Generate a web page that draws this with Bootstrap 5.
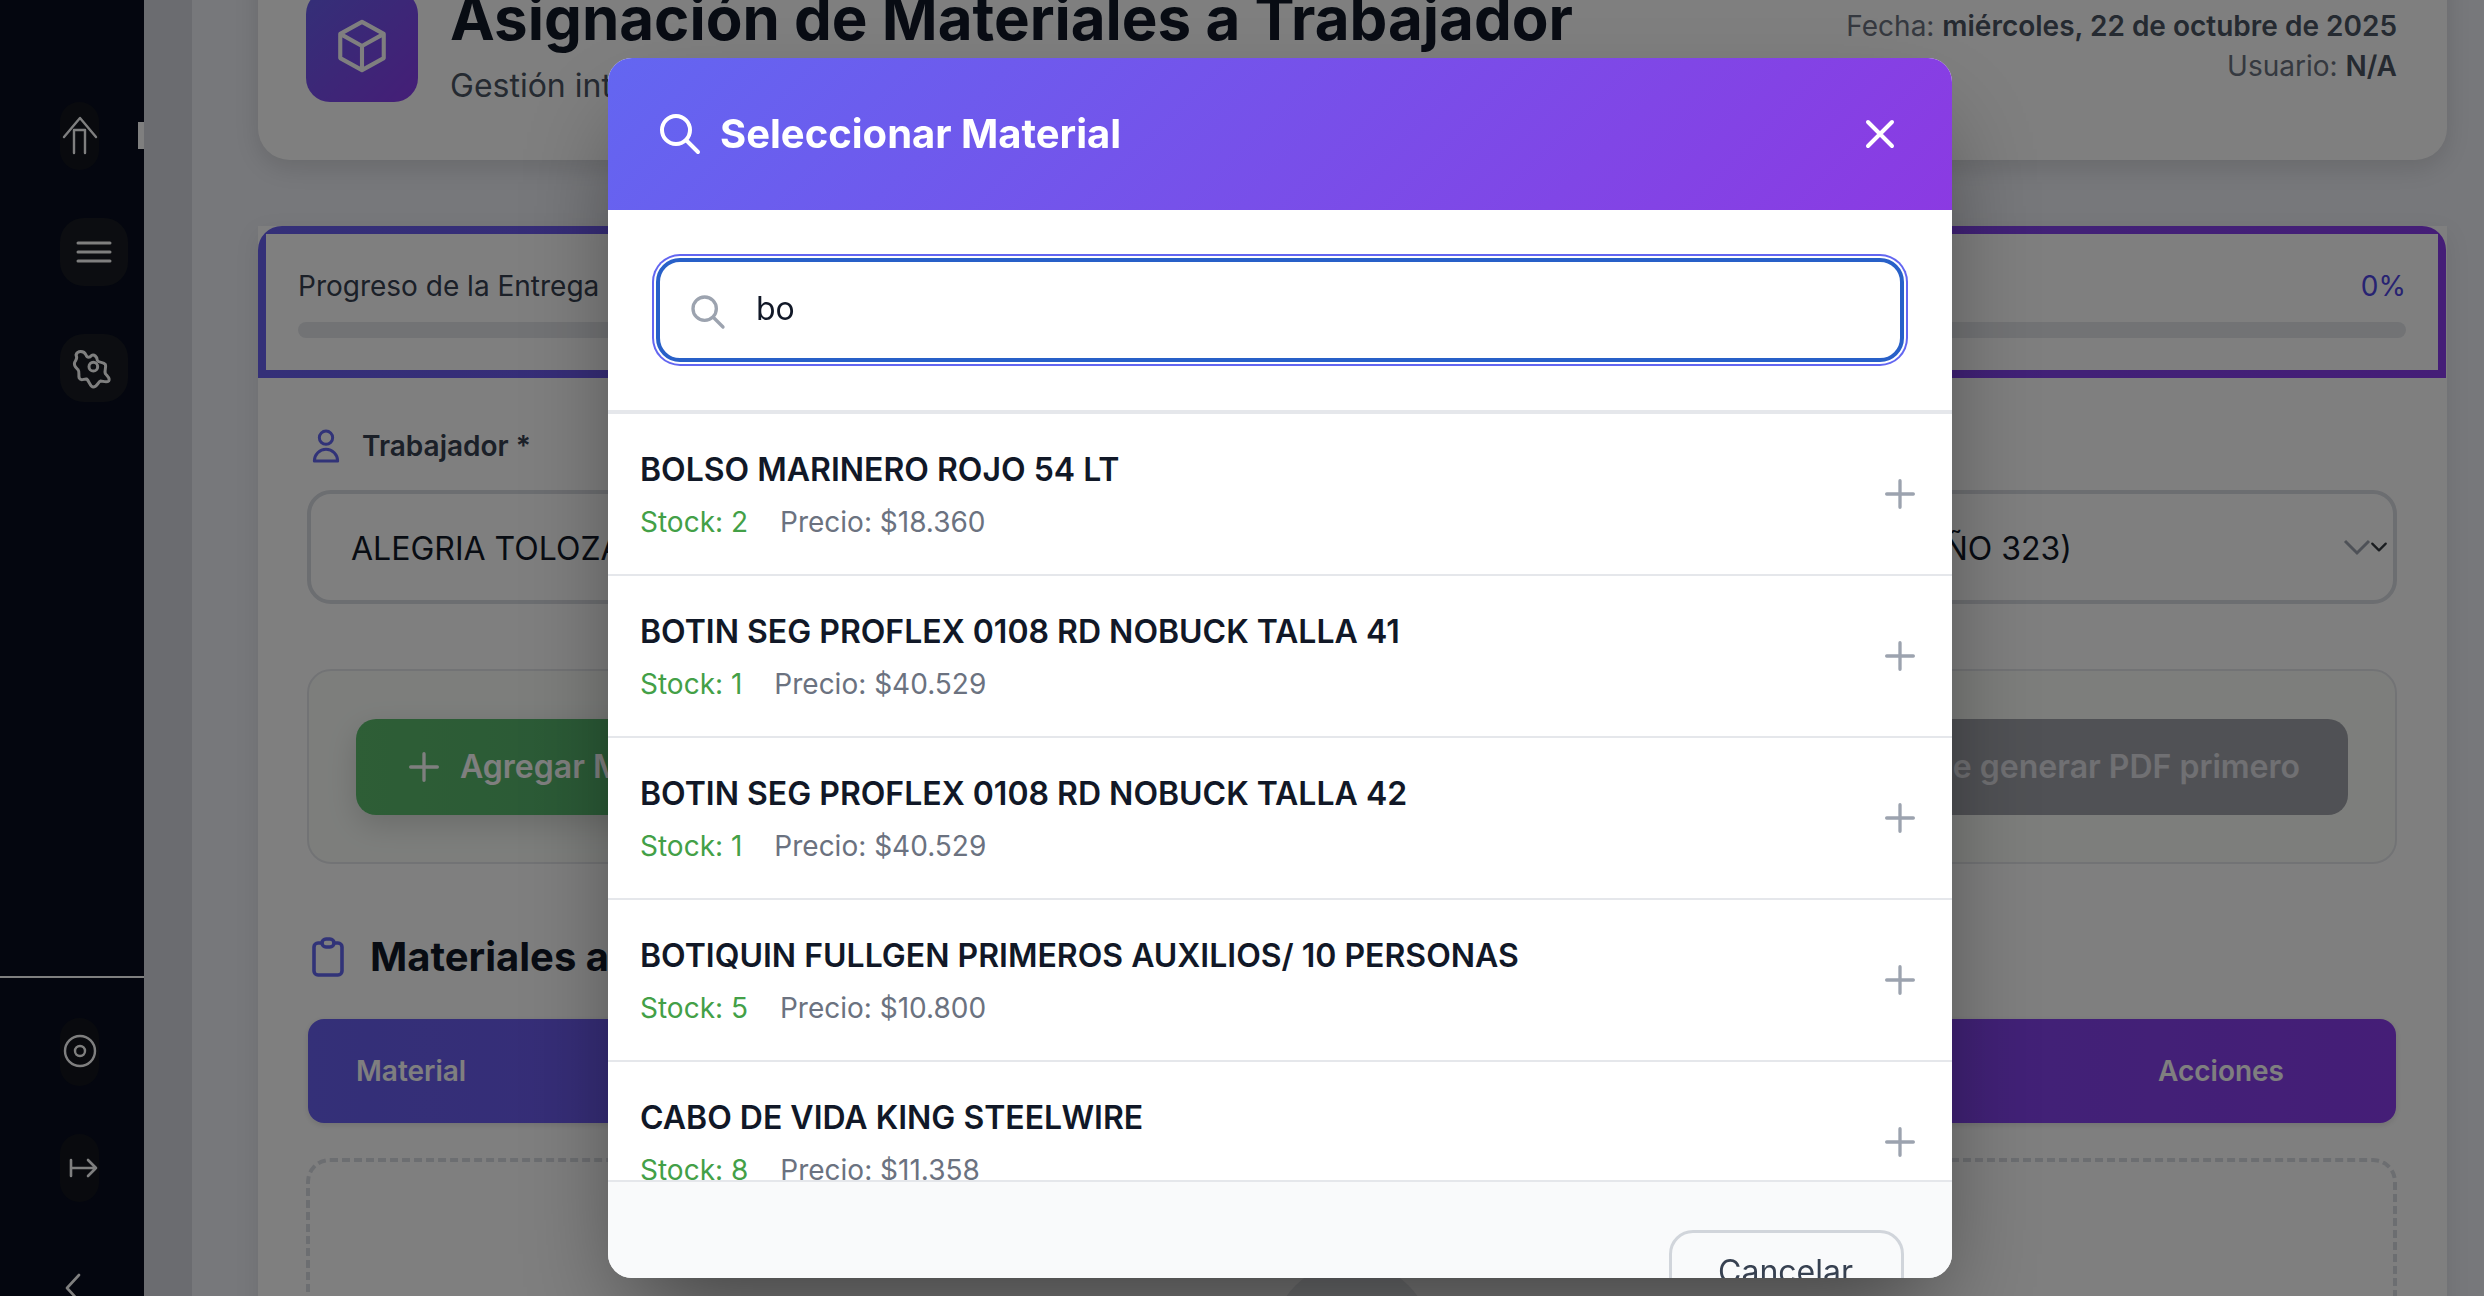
<!DOCTYPE html>
<html lang="es">
<head>
<meta charset="utf-8">
<title>Asignación de Materiales a Trabajador</title>
<link href="https://cdn.jsdelivr.net/npm/bootstrap@5.3.0/dist/css/bootstrap.min.css" rel="stylesheet">
<style>
html,body{height:100%;overflow:hidden}
body{font-family:"Inter","Liberation Sans",sans-serif;color:#111827;background:#eef0f6}
svg{display:block;flex:none}
.shell{height:1296px;overflow:hidden}
.side{width:144px;background:#080c1e;padding:102px 0 0 60px;position:relative}
.side-btn{background:#181b22;border-radius:24px;height:68px;width:68px;margin-bottom:48px;color:#fff;padding-top:14px}
.side-btn.narrow{width:39px;background:#12151d;color:#fff}
.side-btn.flush{padding-top:0}
.side-line{height:2px;background:#fff;margin:574px 0 40px -60px}
.side-handle{position:absolute;left:138px;top:122px;width:6px;height:27px;background:#fff}
.side-chev{margin:71px 0 0 3px}
.gutter{width:48px;background:#d6d8e0}
.main{padding:0 37px 0 66px;width:2292px}
.hero{height:218px;margin-top:-58px;background:#fff;border-radius:0 0 32px 32px;box-shadow:0 8px 24px rgba(0,0,0,.12);padding:48px 50px 0 48px}
.tile{width:112px;height:112px;border-radius:24px;background:linear-gradient(135deg,#6860f0,#8a3cee);color:#fff;margin-right:32px}
.hero-title{font-size:60px;line-height:72px;font-weight:700;margin:-8px 0 0;white-space:nowrap}
.hero-sub{font-size:32px;line-height:48px;color:#4b5563;margin:8px 0 0}
.hero-meta{font-size:28px;line-height:40px;color:#6b7280;text-align:right;margin-top:16px}
.hero-meta b{font-weight:600;color:#4b5563}
.panel{margin-top:66px;background:#fff;height:1200px;box-shadow:0 8px 24px rgba(0,0,0,.08);padding-bottom:0}
.bar-frame{background:linear-gradient(90deg,#6860f0,#8a3cee);padding:8px;border-radius:24px 24px 0 0;height:152px;margin-right:1px}
.bar-inner{background:#fff;height:136px;padding:32px 32px 0}
.bar-text{font-size:28px;line-height:40px;color:#374151;margin-bottom:16px}
.bar-pct{color:#4f46e5}
.bar-track{height:16px;background:#e5e7eb;border-radius:8px}
.form-area{padding:48px 50px 0 49px}
.label-row{font-size:28px;line-height:40px;font-weight:600;color:#374151;gap:8px}
.pick{margin-top:24px;height:114px;border:4px solid #d9dce2;border-radius:24px;font-size:32px;line-height:48px;color:#111827;padding:3px 0 0 40px;background-size:24px 18px;background-position:right 2px center;background-color:#fff;box-shadow:none}
.pick-text{width:1721px}
.pick-caret{color:#9ca3af;margin-left:auto;margin-right:22px;margin-top:-3px}
.action-box{margin-top:65px;height:195px;border:2px solid #e5e7eb;border-radius:24px;background:#fafdf9;padding:48px 47px}
.act{height:96px;border:0;border-radius:20px;font-size:32px;line-height:48px;font-weight:600;color:#fff;padding:0 48px}
.act-green{background:linear-gradient(90deg,#5cbc6c,#46a070);width:900px;gap:16px;box-shadow:0 10px 30px rgba(0,0,0,.15)}
.act-gray{background:#a1a3aa;color:#e0e0e6;width:1000px}
.sec-head{margin-top:63px;font-size:40px;line-height:60px;font-weight:700;gap:18px}
.sec-ico{margin-left:-3px}
.user-ico{margin-left:-1px}
.tbl-head{margin:32px 1px 0;height:104px;border-radius:16px;background:linear-gradient(90deg,#6860f0,#8a3cee);font-size:28px;font-weight:600;color:#fff;padding:0 112px 0 48px;box-shadow:0 2px 6px rgba(0,0,0,.12)}
.empty-box{margin:35px 0 0 -1px;height:500px;border:4px dashed #d9dce2;border-radius:24px;padding-top:100px}
.empty-dot{width:160px;height:160px;border-radius:50%;background:#e5e7eb}
.picker{max-width:1344px;margin:58px 0 0 608px}
.picker-card{height:1220px;border:0;border-radius:24px;overflow:hidden;box-shadow:0 50px 100px -24px rgba(0,0,0,.5)}
.picker-head{height:152px;padding:0 48px;background:linear-gradient(135deg,#6366f1,#8b3ae2);border:0;border-radius:0;color:#fff;gap:16px}
.picker-title{font-size:40px;line-height:56px;font-weight:700;margin:0}
.picker-close{margin-left:auto;background:none;border:0;padding:0;color:#fff}
.search-wrap{height:204px;padding:48px;border-bottom:4px solid #e5e7eb;position:relative}
.search-in{height:104px;border:4px solid #2860c8;border-radius:24px;font-size:32px;color:#111827;padding:0 32px 3px 96px;box-shadow:0 0 0 2px #fff,0 0 0 4px #6366f1}
.search-in:focus{border-color:#2860c8;box-shadow:0 0 0 2px #fff,0 0 0 4px #6366f1}
.search-ico{position:absolute;left:80px;top:82px;color:#9ca3af}
.mat-list{height:766px;overflow:hidden;border-radius:0}
.mat-item{height:162px;border:0;border-bottom:2px solid #e5e7eb;border-radius:0!important;padding:32px;margin:0}
.mat-name{font-size:32px;line-height:48px;font-weight:600;color:#111827}
.mat-sub{font-size:28px;line-height:40px;margin-top:8px;color:#6b7280;gap:32px}
.mat-stock{color:#43a047}
.mat-plus{color:#9ca3af;margin-left:auto}
.picker-foot{display:block;height:98px;background:#f9fafb;border:0;border-top:2px solid #e5e7eb;padding:48px 48px 0;text-align:right;border-radius:0}
.cancel{border:3px solid #d1d5db;border-radius:24px;background:#f9fafb;font-size:32px;line-height:48px;color:#374151;padding:14px 48px 14px 46px;margin:0;height:84px}
</style>
</head>
<body>
<div class="shell d-flex">
  <aside class="side flex-shrink-0">
    <div class="side-btn narrow"><svg width="39" height="40" viewBox="0 0 39 40" fill="none" stroke="currentColor" stroke-width="2.4" stroke-linecap="round" stroke-linejoin="round"><path d="M4 21 20 2l16 19M14 37V14h11v23"/></svg></div>
    <div class="side-btn"><svg class="ms-3" width="36" height="40" viewBox="0 0 36 40" fill="none" stroke="currentColor" stroke-width="3" stroke-linecap="round"><path d="M2 11h32M2 20h32M2 29h32"/></svg></div>
    <div class="side-btn flush"><svg width="68" height="68" viewBox="30 27 204 204" fill="none" stroke="currentColor" stroke-width="9" stroke-linecap="round" stroke-linejoin="round"><path d="M78 90C82 76 102 76 108 90 112 100 120 98 124 92 132 86 142 96 142 106 146 114 160 110 166 118 170 128 162 136 166 146 172 154 182 160 176 168 170 174 158 168 152 168 144 170 142 186 130 186 120 186 118 168 110 162 102 160 94 170 88 160 84 150 90 142 84 134 78 128 70 122 74 112 78 104 84 100 78 90Z"/><circle cx="130" cy="125" r="13"/></svg></div>
    <div class="side-line"></div>
    <div class="side-btn narrow"><svg width="39" height="40" viewBox="0 0 39 40" fill="none" stroke="currentColor" stroke-width="2.4"><circle cx="20" cy="19" r="15"/><circle cx="20" cy="19" r="5"/></svg></div>
    <div class="side-btn narrow"><svg width="39" height="40" viewBox="0 0 39 40" fill="none" stroke="currentColor" stroke-width="2.6" stroke-linecap="round" stroke-linejoin="round"><path d="M11 12v16M11 20h25M28 12l8 8-8 8"/></svg></div>
    <svg class="side-chev" width="18" height="30" viewBox="0 0 18 30" fill="none" stroke="#fff" stroke-width="2.6" stroke-linecap="round" stroke-linejoin="round"><path d="M16 2 4 15l12 13"/></svg>
    <div class="side-handle"></div>
  </aside>
  <div class="gutter flex-shrink-0"></div>
  <main class="main flex-shrink-0">
    <header class="hero d-flex align-items-start">
      <div class="tile d-flex align-items-center justify-content-center flex-shrink-0"><svg width="58" height="58" viewBox="0 0 24 24" fill="none" stroke="currentColor" stroke-width="1.7" stroke-linejoin="round"><path d="M12 2 21 7v10l-9 5-9-5V7zM3 7l9 5 9-5M12 12v10"/></svg></div>
      <div class="flex-grow-1">
        <h1 class="hero-title">Asignación de Materiales a Trabajador</h1>
        <p class="hero-sub">Gestión integral de entregas</p>
      </div>
      <div class="hero-meta">Fecha: <b>miércoles, 22 de octubre de 2025</b><br>Usuario: <b>N/A</b></div>
    </header>
    <section class="panel">
      <div class="bar-frame"><div class="bar-inner">
        <div class="bar-text d-flex justify-content-between"><span>Progreso de la Entrega</span><span class="bar-pct">0%</span></div>
        <div class="bar-track"></div>
      </div></div>
      <div class="form-area">
        <div class="label-row d-flex align-items-center"><svg class="user-ico" width="40" height="40" viewBox="0 0 24 24" fill="none" stroke="#6366f1" stroke-width="1.8" stroke-linejoin="round"><path d="M16 7a4 4 0 11-8 0 4 4 0 018 0zM12 14a7 7 0 00-7 7h14a7 7 0 00-7-7z"/></svg><span class="ms-2">Trabajador *</span></div>
        <div class="form-select pick d-flex align-items-center">
          <div class="pick-text d-flex justify-content-between"><span>ALEGRIA TOLOZA</span><span>AÑO 323)</span></div>
          <svg class="pick-caret" width="28" height="18" viewBox="0 0 28 18" fill="none" stroke="currentColor" stroke-width="3"><path d="M2 3l12 12L26 3"/></svg>
        </div>
        <div class="action-box d-flex justify-content-between">
          <button class="act act-green d-flex align-items-center" type="button"><svg width="40" height="40" viewBox="0 0 24 24" fill="none" stroke="currentColor" stroke-width="2" stroke-linecap="round"><path d="M12 4v16m8-8H4"/></svg>Agregar Material</button>
          <button class="act act-gray d-flex align-items-center justify-content-end" type="button">Debe generar PDF primero</button>
        </div>
        <h2 class="sec-head d-flex align-items-center mb-0"><svg class="sec-ico" width="48" height="48" viewBox="0 0 24 24" fill="none" stroke="#6366f1" stroke-width="1.8" stroke-linejoin="round"><path d="M9 5H7a2 2 0 00-2 2v12a2 2 0 002 2h10a2 2 0 002-2V7a2 2 0 00-2-2h-2M9 5a2 2 0 002 2h2a2 2 0 002-2M9 5a2 2 0 012-2h2a2 2 0 012 2"/></svg>Materiales asignados</h2>
        <div class="tbl-head d-flex align-items-center justify-content-between"><span>Material</span><span>Acciones</span></div>
        <div class="empty-box"><div class="empty-dot mx-auto"></div></div>
      </div>
    </section>
  </main>
</div>

<div class="modal-backdrop show"></div>
<div class="modal d-block" tabindex="-1">
  <div class="modal-dialog picker">
    <div class="modal-content picker-card">
      <div class="modal-header picker-head">
        <svg width="48" height="48" viewBox="0 0 24 24" fill="none" stroke="currentColor" stroke-width="2" stroke-linecap="round"><path d="M21 21l-6-6m2-5a7 7 0 11-14 0 7 7 0 0114 0z"/></svg>
        <h5 class="modal-title picker-title">Seleccionar Material</h5>
        <button class="picker-close" type="button" aria-label="Cerrar"><svg width="48" height="48" viewBox="0 0 24 24" fill="none" stroke="currentColor" stroke-width="2" stroke-linecap="round"><path d="M6 18 18 6M6 6l12 12"/></svg></button>
      </div>
      <div class="search-wrap">
        <input class="form-control search-in" type="text" value="bo" aria-label="Buscar">
        <svg class="search-ico" width="40" height="40" viewBox="0 0 24 24" fill="none" stroke="currentColor" stroke-width="2" stroke-linecap="round"><path d="M21 21l-6-6m2-5a7 7 0 11-14 0 7 7 0 0114 0z"/></svg>
      </div>
      <div class="list-group mat-list">
        <div class="list-group-item mat-item d-flex align-items-center">
          <div><div class="mat-name">BOLSO MARINERO ROJO 54 LT</div><div class="mat-sub d-flex"><span class="mat-stock">Stock: 2</span><span>Precio: $18.360</span></div></div>
          <svg class="mat-plus" width="40" height="40" viewBox="0 0 24 24" fill="none" stroke="currentColor" stroke-width="2" stroke-linecap="round"><path d="M12 4v16m8-8H4"/></svg>
        </div>
        <div class="list-group-item mat-item d-flex align-items-center">
          <div><div class="mat-name">BOTIN SEG PROFLEX 0108 RD NOBUCK TALLA 41</div><div class="mat-sub d-flex"><span class="mat-stock">Stock: 1</span><span>Precio: $40.529</span></div></div>
          <svg class="mat-plus" width="40" height="40" viewBox="0 0 24 24" fill="none" stroke="currentColor" stroke-width="2" stroke-linecap="round"><path d="M12 4v16m8-8H4"/></svg>
        </div>
        <div class="list-group-item mat-item d-flex align-items-center">
          <div><div class="mat-name">BOTIN SEG PROFLEX 0108 RD NOBUCK TALLA 42</div><div class="mat-sub d-flex"><span class="mat-stock">Stock: 1</span><span>Precio: $40.529</span></div></div>
          <svg class="mat-plus" width="40" height="40" viewBox="0 0 24 24" fill="none" stroke="currentColor" stroke-width="2" stroke-linecap="round"><path d="M12 4v16m8-8H4"/></svg>
        </div>
        <div class="list-group-item mat-item d-flex align-items-center">
          <div><div class="mat-name">BOTIQUIN FULLGEN PRIMEROS AUXILIOS/ 10 PERSONAS</div><div class="mat-sub d-flex"><span class="mat-stock">Stock: 5</span><span>Precio: $10.800</span></div></div>
          <svg class="mat-plus" width="40" height="40" viewBox="0 0 24 24" fill="none" stroke="currentColor" stroke-width="2" stroke-linecap="round"><path d="M12 4v16m8-8H4"/></svg>
        </div>
        <div class="list-group-item mat-item d-flex align-items-center">
          <div><div class="mat-name">CABO DE VIDA KING STEELWIRE</div><div class="mat-sub d-flex"><span class="mat-stock">Stock: 8</span><span>Precio: $11.358</span></div></div>
          <svg class="mat-plus" width="40" height="40" viewBox="0 0 24 24" fill="none" stroke="currentColor" stroke-width="2" stroke-linecap="round"><path d="M12 4v16m8-8H4"/></svg>
        </div>
      </div>
      <div class="modal-footer picker-foot"><button class="btn cancel" type="button">Cancelar</button></div>
    </div>
  </div>
</div>
<script src="https://cdn.jsdelivr.net/npm/bootstrap@5.3.0/dist/js/bootstrap.bundle.min.js"></script>
</body>
</html>
